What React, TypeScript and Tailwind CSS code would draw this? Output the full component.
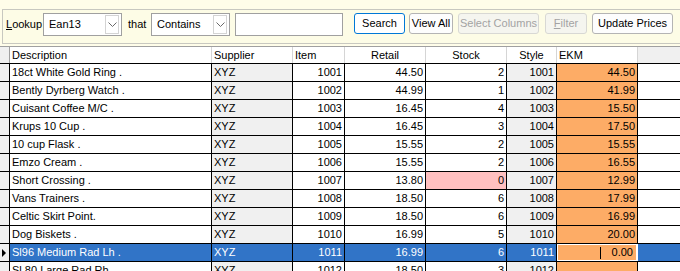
import React from "react";

type Row = {
  desc: string;
  item: string;
  retail: string;
  stock: string;
  style: string;
  ekm: string;
};

const rows: Row[] = [
  { desc: "18ct White Gold Ring .", item: "1001", retail: "44.50", stock: "2", style: "1001", ekm: "44.50" },
  { desc: "Bently Dyrberg Watch .", item: "1002", retail: "44.99", stock: "1", style: "1002", ekm: "41.99" },
  { desc: "Cuisant Coffee M/C .", item: "1003", retail: "16.45", stock: "4", style: "1003", ekm: "15.50" },
  { desc: "Krups 10 Cup .", item: "1004", retail: "16.45", stock: "3", style: "1004", ekm: "17.50" },
  { desc: "10 cup Flask .", item: "1005", retail: "15.55", stock: "2", style: "1005", ekm: "15.55" },
  { desc: "Emzo Cream .", item: "1006", retail: "15.55", stock: "2", style: "1006", ekm: "16.55" },
  { desc: "Short Crossing .", item: "1007", retail: "13.80", stock: "0", style: "1007", ekm: "12.99" },
  { desc: "Vans Trainers .", item: "1008", retail: "18.50", stock: "6", style: "1008", ekm: "17.99" },
  { desc: "Celtic Skirt Point.", item: "1009", retail: "18.50", stock: "6", style: "1009", ekm: "16.99" },
  { desc: "Dog Biskets .", item: "1010", retail: "16.99", stock: "5", style: "1010", ekm: "20.00" },
  { desc: "Sl96 Medium Rad Lh .", item: "1011", retail: "16.99", stock: "6", style: "1011", ekm: "0.00" },
  { desc: "Sl 80 Large Rad Rh .", item: "1012", retail: "18.50", stock: "3", style: "1012", ekm: "" },
];

const SELECTED = 10;

function Chevron() {
  return (
    <svg width="9" height="5" viewBox="0 0 9 5">
      <path d="M0.5 0.5 L4.5 4.5 L8.5 0.5" fill="none" stroke="#6a6a6a" strokeWidth="1" />
    </svg>
  );
}

function Combo({ value }: { value: string }) {
  return (
    <div className="flex h-[23px] w-[79px] items-center border border-[#a0a0a0] bg-white">
      <span className="flex-1 pl-[5px] text-black">{value}</span>
      <div className="mr-[2px] flex h-[19px] w-[14px] items-center justify-center border border-[#d4d4d4] bg-white">
        <Chevron />
      </div>
    </div>
  );
}

export default function App() {
  return (
    <div className="h-[271px] w-[680px] overflow-hidden bg-[#fffde9] font-['Liberation_Sans',Arial,sans-serif] text-[11px] text-black">
      {/* Lookup toolbar */}
      <div className="h-[46px] pl-[2px] pt-[9px]">
        <div className="flex h-[35px] items-start border border-r-0 border-[#c8c8c0] bg-[#fdfce6] pl-[3px] pt-[3px]">
          <span className="h-[23px] w-[37px] leading-[23px]">
            <span className="underline">L</span>ookup
          </span>
          <Combo value="Ean13" />
          <span className="ml-[6px] h-[23px] w-[23px] leading-[23px]">that</span>
          <Combo value="Contains" />
          <div className="ml-[5px] h-[23px] w-[108px] border border-[#a0a0a0] bg-white" />
          <button className="ml-[11px] h-[21px] w-[51px] rounded-[3px] border border-[#0078d7] bg-white">
            Search
          </button>
          <button className="ml-[4px] h-[21px] w-[44px] rounded-[3px] border border-[#b4b4b4] bg-[#fdfdfd]">
            View All
          </button>
          <button className="ml-[5px] h-[21px] w-[81px] rounded-[3px] border border-[#d8d8d4] bg-[#f5f5ef] text-[#a3a3a3]">
            Select Columns
          </button>
          <button className="ml-[6px] h-[21px] w-[42px] rounded-[3px] border border-[#d8d8d4] bg-[#f5f5ef] text-[#a3a3a3]">
            <span className="underline">F</span>ilter
          </button>
          <button className="ml-[5px] h-[21px] w-[81px] rounded-[3px] border border-[#b4b4b4] bg-[#fdfdfd]">
            Update Prices
          </button>
        </div>
      </div>

      {/* Grid */}
      <div className="bg-white">
        <div className="flex h-[18px] border-y border-t-[#a0a0a0] border-b-black">
          <div className="w-[10px] border-r border-[#a0a0a0] bg-[#f0f0f0]" />
          <div className="flex w-[202px] items-center border-r border-[#d5d5d5] pl-[2px]">Description</div>
          <div className="flex w-[81px] items-center border-r border-[#d5d5d5] pl-[2px]">Supplier</div>
          <div className="flex w-[52px] items-center border-r border-[#d5d5d5] pl-[2px]">Item</div>
          <div className="flex w-[81px] items-center justify-center border-r border-[#d5d5d5]">Retail</div>
          <div className="flex w-[81px] items-center justify-center border-r border-[#d5d5d5]">Stock</div>
          <div className="flex w-[50px] items-center justify-center border-r border-[#d5d5d5]">Style</div>
          <div className="flex w-[81px] items-center border-r border-[#d5d5d5] pl-[2px]">EKM</div>
          <div className="flex-1 bg-[#f0f0f0]" />
        </div>

        {rows.map((r, i) => {
          const sel = i === SELECTED;
          const base = sel ? "bg-[#3174c7] text-white" : "";
          return (
            <div key={r.item} className="flex h-[18px] border-b border-black">
              <div className="flex w-[10px] items-center border-r border-black bg-[#f0f0f0] pl-[2px]">
                {sel && (
                  <span className="h-0 w-0 border-y-[4px] border-l-[4px] border-y-transparent border-l-black" />
                )}
              </div>
              <div className={`flex w-[202px] items-center border-r border-black pl-[2px] ${base}`}>{r.desc}</div>
              <div className={`flex w-[81px] items-center border-r border-black pl-[2px] ${sel ? base : "bg-[#f0f0f0]"}`}>
                XYZ
              </div>
              <div className={`flex w-[52px] items-center justify-end border-r border-black pr-[2px] ${base}`}>{r.item}</div>
              <div className={`flex w-[81px] items-center justify-end border-r border-black pr-[2px] ${base}`}>{r.retail}</div>
              <div
                className={`flex w-[81px] items-center justify-end border-r border-black pr-[2px] ${
                  sel ? base : r.stock === "0" ? "bg-[#ffc0c0]" : ""
                }`}
              >
                {r.stock}
              </div>
              <div className={`flex w-[50px] items-center justify-end border-r border-black pr-[2px] ${sel ? base : "bg-[#f0f0f0]"}`}>
                {r.style}
              </div>
              {sel ? (
                <div className="w-[81px] border-r border-white bg-[#3174c7]">
                  <div className="flex h-full items-center justify-end border border-white bg-[#fdac66] pr-[3px]">
                    <span className="mr-[11px] h-[12px] w-px bg-black" />
                    {r.ekm}
                  </div>
                </div>
              ) : (
                <div className="flex w-[81px] items-center justify-end border-r border-black bg-[#fdac66] pr-[2px]">
                  {r.ekm}
                </div>
              )}
              <div className={`flex-1 ${base}`} />
            </div>
          );
        })}
      </div>
    </div>
  );
}
